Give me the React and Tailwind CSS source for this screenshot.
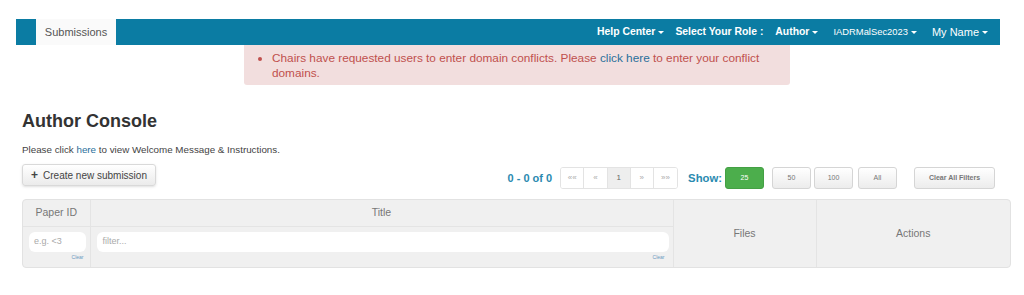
import React from 'react';

function Caret() {
  return <span className="ml-[3px] inline-block align-middle border-x-[3px] border-t-[3px] border-x-transparent border-t-white" />;
}

function PageBtn({ children, active }) {
  return (
    <span
      className={`w-[23.6px] h-full flex items-center justify-center border-r border-[#e3e3e3] last:border-r-0 text-[8px] ${
        active ? 'bg-[#eeeeee] text-[#666]' : 'bg-white text-[#aaa]'
      }`}
    >
      {children}
    </span>
  );
}

function SizeBtn({ children, active, className = '' }) {
  return (
    <span
      className={`h-[22px] w-[39px] flex items-center justify-center rounded-[3px] text-[7px] ${className} ${
        active
          ? 'bg-[#4cae4c] text-white border border-[#44a044]'
          : 'bg-gradient-to-b from-white to-[#ececec] border border-[#d5d5d5] text-[#777]'
      }`}
    >
      {children}
    </span>
  );
}

export default function App() {
  return (
    <div className="w-[1024px] h-[295px] bg-white overflow-hidden font-['Liberation_Sans',Arial,sans-serif] text-[#333]">
      {/* Top navbar */}
      <div className="mt-[19px] ml-[16px] mr-[24px] h-[26px] bg-[#0b7ca3] flex items-stretch">
        <div className="w-[20px]" />
        <div className="w-[80px] bg-[#fafafa] flex items-center justify-center text-[11px] text-[#555]">Submissions</div>
        <div className="flex-1" />
        <div className="flex items-center text-white text-[10.4px] font-bold">
          <span>Help Center<Caret /></span>
          <span className="ml-[11px]">Select Your Role :</span>
          <span className="ml-[12px]">Author<Caret /></span>
          <span className="ml-[15px] font-normal text-[9.4px]">IADRMalSec2023<Caret /></span>
          <span className="ml-[15px] font-normal text-[11px]">My Name<Caret /></span>
        </div>
        <div className="w-[12px]" />
      </div>

      {/* Alert */}
      <div className="ml-[244px] w-[546px] h-[40px] bg-[#f2dede] rounded-b-[3px] pl-[28px] pr-[20px] pt-[6px] text-[11.8px] leading-[15px] text-[#c0504d]">
        <ul className="list-disc">
          <li>
            Chairs have requested users to enter domain conflicts. Please <span className="text-[#2a6f9b]">click here</span> to enter your conflict domains.
          </li>
        </ul>
      </div>

      {/* Console heading */}
      <div className="px-[22px]">
        <h1 className="mt-[25px] text-[18px] leading-[22px] font-bold text-[#333]">Author Console</h1>
        <p className="mt-[12px] text-[9.8px] leading-[12px] text-[#444]">
          Please click <span className="text-[#2a6f9b]">here</span> to view Welcome Message &amp; Instructions.
        </p>

        {/* Toolbar */}
        <div className="mt-[11px] flex items-start">
          <span className="mt-[-3px] h-[22px] w-[134px] flex items-center justify-center rounded-[3px] border border-[#d9d9d9] bg-gradient-to-b from-white to-[#ebebeb] text-[10px] text-[#444] shadow-sm">
            <span className="mr-[5px] text-[12px] font-bold leading-none">+</span>Create new submission
          </span>
          <div className="flex-1" />
          <div className="flex items-center h-[22px] -mr-[9px]">
            <span className="text-[11px] font-bold text-[#2a8ab0]">0 - 0 of 0</span>
            <div className="ml-[8px] h-[22px] w-[118px] flex border border-[#e3e3e3] rounded-[3px] overflow-hidden">
              <PageBtn>««</PageBtn>
              <PageBtn>«</PageBtn>
              <PageBtn active>1</PageBtn>
              <PageBtn>»</PageBtn>
              <PageBtn>»»</PageBtn>
            </div>
            <span className="ml-[10px] text-[11.3px] font-bold text-[#2a8ab0]">Show:</span>
            <div className="ml-[3px] flex">
              <SizeBtn active>25</SizeBtn>
              <SizeBtn className="ml-[8px]">50</SizeBtn>
              <SizeBtn className="ml-[3px]">100</SizeBtn>
              <SizeBtn className="ml-[5px]">All</SizeBtn>
            </div>
            <span className="ml-[17px] h-[22px] w-[81px] flex items-center justify-center rounded-[3px] border border-[#d5d5d5] bg-gradient-to-b from-white to-[#ececec] text-[7px] font-bold text-[#777]">
              Clear All Filters
            </span>
            <span className="w-[16px]" />
          </div>
        </div>

        {/* Table */}
        <div className="mt-[10px] w-[989px] rounded-[4px] border border-[#e2e2e2] bg-[#f0f0f0] overflow-hidden">
          <table className="w-full border-collapse table-fixed text-[10.5px] text-[#777]">
            <colgroup>
              <col className="w-[67px]" />
              <col className="w-[583px]" />
              <col className="w-[143px]" />
              <col />
            </colgroup>
            <tbody>
              <tr className="h-[26px]">
                <td className="p-0 text-center border-r border-b border-[#e4e4e4]">Paper ID</td>
                <td className="p-0 text-center border-r border-b border-[#e4e4e4]">Title</td>
                <td rowSpan={2} className="p-0 text-center align-middle border-r border-[#e4e4e4]">Files</td>
                <td rowSpan={2} className="p-0 text-center align-middle">Actions</td>
              </tr>
              <tr className="h-[41px]">
                <td className="border-r border-[#e4e4e4] pl-[6px] pr-[3px] pt-[5px] pb-0 align-top">
                  <div className="h-[20px] w-[57px] rounded-[6px] bg-white flex items-center pl-[5px] text-[9px] text-[#aaa]">e.g. &lt;3</div>
                  <div className="text-right pr-[3px] text-[5px] leading-[10px] text-[#6a9ac0]">Clear</div>
                </td>
                <td className="border-r border-[#e4e4e4] pl-[6px] pr-[4px] pt-[5px] pb-0 align-top">
                  <div className="h-[20px] rounded-[6px] bg-white flex items-center pl-[6px] text-[9px] text-[#aaa]">filter...</div>
                  <div className="text-right pr-[4px] text-[5px] leading-[10px] text-[#6a9ac0]">Clear</div>
                </td>
              </tr>
            </tbody>
          </table>
        </div>
      </div>
    </div>
  );
}
